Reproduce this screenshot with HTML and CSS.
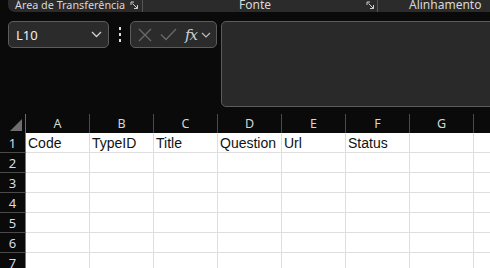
FILE: index.html
```html
<!DOCTYPE html>
<html lang="pt">
<head>
    <meta charset="UTF-8">
    <title>Planilha</title>
    <link rel="stylesheet" href="styles.css">
</head>
<body>
    <div class="ribbon">
        <div class="group group-clip">
            <span class="group-label">Área de Transferência</span>
            <svg class="launcher" width="9" height="9" viewBox="0 0 9 9"><path d="M1 4V1h3M2.5 2.5L7.5 7.5M4 7.5h3.5V4" fill="none" stroke="#cfcfcf" stroke-width="1"/></svg>
        </div>
        <div class="group group-font">
            <span class="group-label">Fonte</span>
            <svg class="launcher" width="9" height="9" viewBox="0 0 9 9"><path d="M1 4V1h3M2.5 2.5L7.5 7.5M4 7.5h3.5V4" fill="none" stroke="#cfcfcf" stroke-width="1"/></svg>
        </div>
        <div class="group group-align">
            <span class="group-label">Alinhamento</span>
        </div>
    </div>

    <div class="formula-row">
        <div class="name-box">
            <span class="name-text">L10</span>
            <svg width="11" height="7" viewBox="0 0 11 7"><polyline points="1,1 5.5,5.5 10,1" fill="none" stroke="#d0d0d0" stroke-width="1.3"/></svg>
        </div>
        <div class="more-dots">
            <span></span><span></span><span></span>
        </div>
        <div class="fx-box">
            <svg width="14" height="14" viewBox="0 0 14 14"><path d="M1 1L13 13M13 1L1 13" stroke="#6a6a6a" stroke-width="1.3"/></svg>
            <svg width="17" height="13" viewBox="0 0 17 13"><polyline points="1,6.5 6,11.5 16,1" fill="none" stroke="#6a6a6a" stroke-width="1.3"/></svg>
            <span class="fx-text">fx</span>
            <svg width="10" height="6" viewBox="0 0 10 6"><polyline points="1,1 5,5 9,1" fill="none" stroke="#bcbcbc" stroke-width="1.2"/></svg>
        </div>
        <div class="formula-input"></div>
    </div>

    <div class="sheet">
        <div class="head-row">
            <div class="corner"><span class="corner-tri"></span></div>
            <div class="col-head">A</div>
            <div class="col-head">B</div>
            <div class="col-head">C</div>
            <div class="col-head">D</div>
            <div class="col-head">E</div>
            <div class="col-head">F</div>
            <div class="col-head">G</div>
            <div class="col-head">H</div>
        </div>
        <div class="row">
            <div class="row-head">1</div>
            <div class="cell">Code</div>
            <div class="cell">TypeID</div>
            <div class="cell">Title</div>
            <div class="cell">Question</div>
            <div class="cell">Url</div>
            <div class="cell">Status</div>
            <div class="cell"></div>
            <div class="cell"></div>
        </div>
        <div class="row">
            <div class="row-head">2</div>
            <div class="cell"></div><div class="cell"></div><div class="cell"></div><div class="cell"></div>
            <div class="cell"></div><div class="cell"></div><div class="cell"></div><div class="cell"></div>
        </div>
        <div class="row">
            <div class="row-head">3</div>
            <div class="cell"></div><div class="cell"></div><div class="cell"></div><div class="cell"></div>
            <div class="cell"></div><div class="cell"></div><div class="cell"></div><div class="cell"></div>
        </div>
        <div class="row">
            <div class="row-head">4</div>
            <div class="cell"></div><div class="cell"></div><div class="cell"></div><div class="cell"></div>
            <div class="cell"></div><div class="cell"></div><div class="cell"></div><div class="cell"></div>
        </div>
        <div class="row">
            <div class="row-head">5</div>
            <div class="cell"></div><div class="cell"></div><div class="cell"></div><div class="cell"></div>
            <div class="cell"></div><div class="cell"></div><div class="cell"></div><div class="cell"></div>
        </div>
        <div class="row">
            <div class="row-head">6</div>
            <div class="cell"></div><div class="cell"></div><div class="cell"></div><div class="cell"></div>
            <div class="cell"></div><div class="cell"></div><div class="cell"></div><div class="cell"></div>
        </div>
        <div class="row">
            <div class="row-head">7</div>
            <div class="cell"></div><div class="cell"></div><div class="cell"></div><div class="cell"></div>
            <div class="cell"></div><div class="cell"></div><div class="cell"></div><div class="cell"></div>
        </div>
    </div>
</body>
</html>
```

FILE: styles.css
```css
* {
    margin: 0;
    padding: 0;
    box-sizing: border-box;
}

body {
    font-family: 'Noto Sans', 'Open Sans', sans-serif;
    background-color: #0a0a0a;
    color: #d6d6d6;
    width: 490px;
    height: 268px;
    overflow: hidden;
}

/* Ribbon group labels (cut off at top) */
.ribbon {
    display: flex;
    height: 12px;
    margin-left: 8px;
    background: #2b2b2b;
    border-bottom-left-radius: 7px;
    overflow: hidden;
}

.group {
    display: flex;
    align-items: flex-end;
    flex-shrink: 0;
    height: 12px;
    border-right: 1px solid #555;
}

.group-label {
    font-size: 12px;
    line-height: 12px;
    color: #d8d8d8;
    position: relative;
    top: -1px;
    white-space: nowrap;
}

.group-clip {
    width: 135px;
    padding-left: 7px;
}

.group-clip .group-label {
    font-size: 10.8px;
}

.group-clip .launcher {
    margin-left: 5px;
    margin-bottom: 2px;
}

.group-font {
    width: 235px;
    padding-left: 96px;
}

.group-font .launcher {
    margin-left: 95px;
    margin-bottom: 2px;
}

.group-align {
    flex: 1;
    border-right: none;
    padding-left: 31px;
}

/* Name box + formula bar */
.formula-row {
    display: flex;
    align-items: flex-start;
    margin-top: 9px;
    padding-left: 8px;
}

.name-box {
    width: 101px;
    height: 27px;
    flex-shrink: 0;
    display: flex;
    align-items: center;
    justify-content: space-between;
    padding: 0 6px 0 7px;
    background: #2b2b2b;
    border: 1px solid #5c5c5c;
    border-radius: 5px;
}

.name-text {
    font-size: 13px;
    color: #f0f0f0;
}

.more-dots {
    width: 21px;
    height: 27px;
    flex-shrink: 0;
    display: flex;
    flex-direction: column;
    align-items: center;
    justify-content: center;
    gap: 3px;
}

.more-dots span {
    width: 2px;
    height: 3px;
    background: #e0e0e0;
}

.fx-box {
    width: 87px;
    height: 27px;
    flex-shrink: 0;
    display: flex;
    align-items: center;
    padding: 0 3px 0 7px;
    background: #2b2b2b;
    border: 1px solid #5c5c5c;
    border-radius: 5px;
}

.fx-box svg:nth-child(2) {
    margin-left: 8px;
}

.fx-text {
    font-family: 'DejaVu Serif', 'Liberation Serif', serif;
    font-style: italic;
    font-size: 15px;
    color: #d0d0d0;
    margin-left: 8px;
    margin-right: 4px;
    letter-spacing: -1px;
}

.formula-input {
    flex: 1;
    height: 86px;
    margin-left: 4px;
    margin-right: -10px;
    background: #292929;
    border: 1px solid #5c5c5c;
    border-radius: 5px;
}

/* Sheet grid */
.sheet {
    margin-top: 7px;
}

.head-row,
.row {
    display: flex;
}

.corner {
    width: 26px;
    height: 19px;
    flex-shrink: 0;
    position: relative;
    border-right: 1px solid #6a6a6a;
}

.corner-tri {
    position: absolute;
    right: 3px;
    bottom: 2px;
    width: 0;
    height: 0;
    border-left: 12px solid transparent;
    border-bottom: 12px solid #6e6e6e;
}

.col-head {
    width: 64px;
    height: 19px;
    flex-shrink: 0;
    text-align: center;
    font-size: 12.5px;
    line-height: 19px;
    color: #d6d6d6;
    border-right: 1px solid #4a4a4a;
}

.row-head {
    width: 26px;
    height: 20px;
    flex-shrink: 0;
    text-align: center;
    font-size: 13px;
    line-height: 20px;
    color: #d6dce6;
    border-right: 1px solid #7a7a7a;
    border-bottom: 1px solid #4a4a4a;
}

.cell {
    width: 64px;
    height: 20px;
    flex-shrink: 0;
    background: #fff;
    color: #111;
    font-family: 'Liberation Sans', Arial, sans-serif;
    font-size: 14px;
    line-height: 20px;
    padding-left: 2px;
    white-space: nowrap;
    border-right: 1px solid #dedede;
    border-bottom: 1px solid #dedede;
}
```
